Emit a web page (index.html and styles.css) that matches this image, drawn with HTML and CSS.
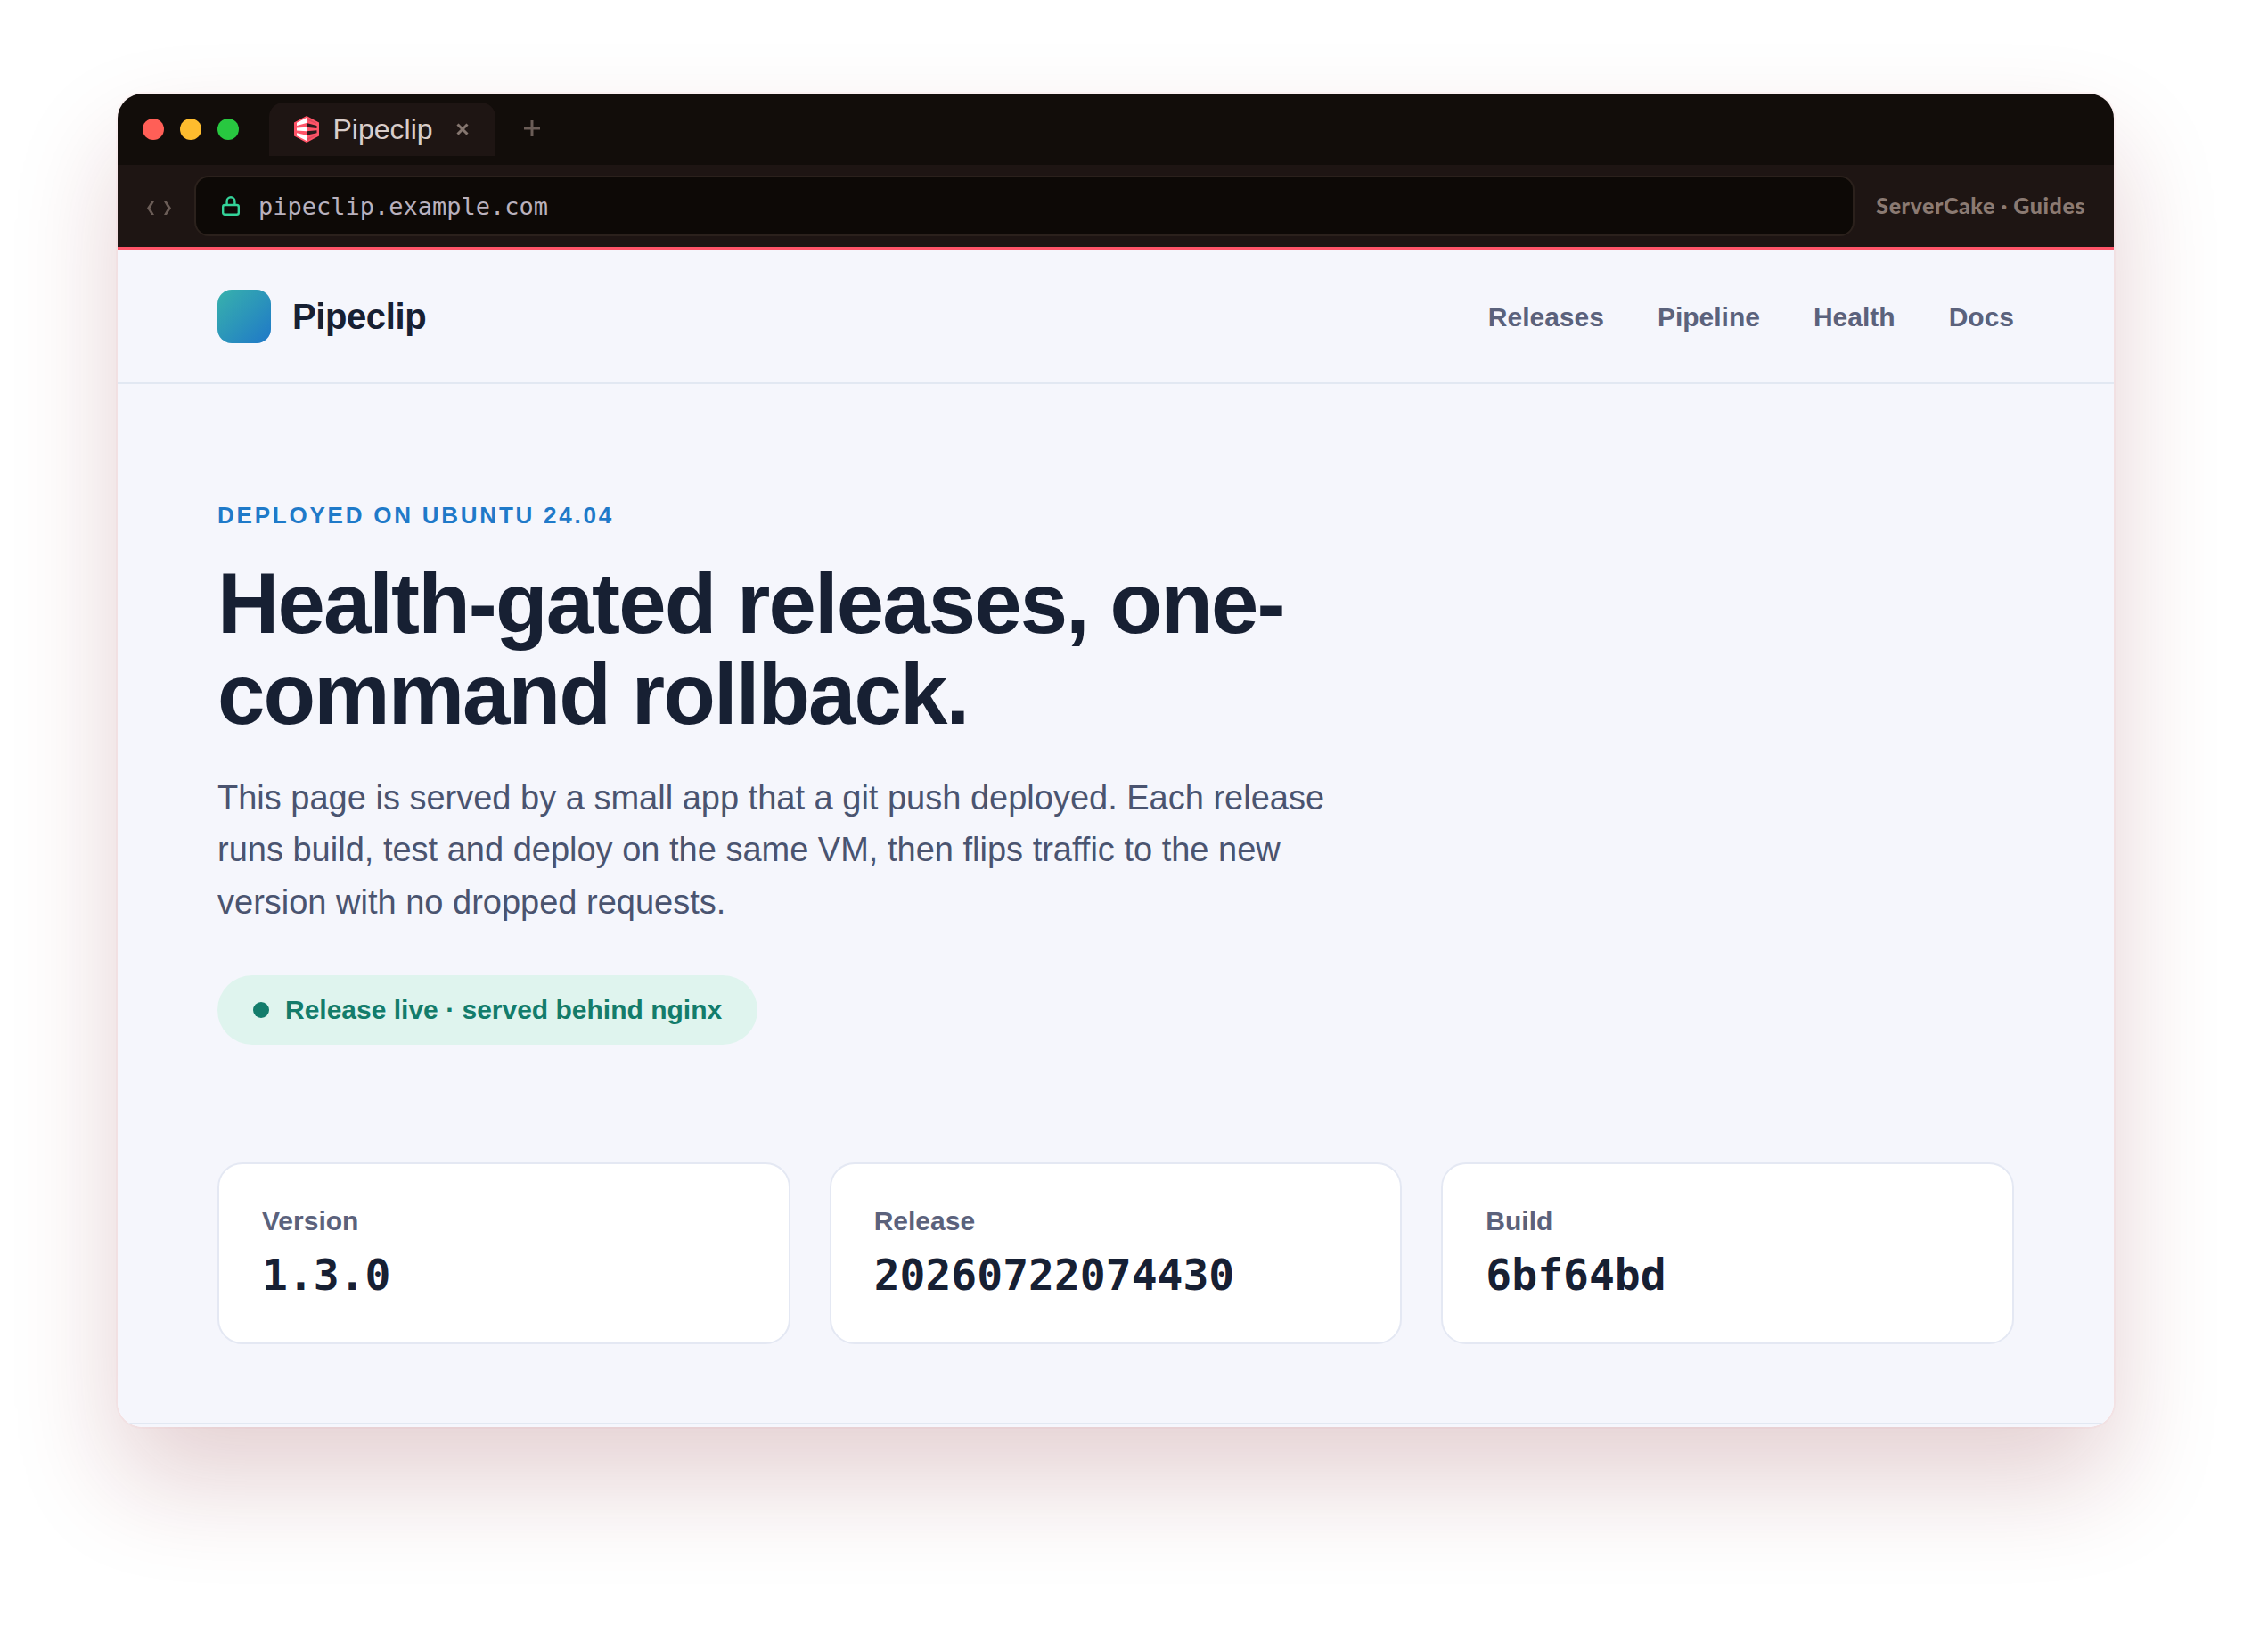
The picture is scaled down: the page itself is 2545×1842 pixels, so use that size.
FILE: index.html
```html
<!DOCTYPE html>
<html lang="en">
<head>
    <meta charset="UTF-8">
    <meta name="viewport" content="width=device-width, initial-scale=1.0">
    <title>Pipeclip</title>
    <link rel="stylesheet" href="styles.css">
</head>
<body>
    <div class="window">
        <div class="titlebar">
            <div class="dots">
                <span class="dot dot-red"></span>
                <span class="dot dot-yellow"></span>
                <span class="dot dot-green"></span>
            </div>
            <div class="tab">
                <svg class="favicon" viewBox="0 0 32 32">
                    <path d="M16 1 30 8.5V23.5L16 31 2 23.5V8.5Z" fill="#ff5468"/>
                    <path d="M16 3V9L5 12V8.8ZM16 13.8V18.2L5 17.4V14.4ZM16 22.8V29L5 23.2V20.2Z" fill="#fff"/>
                    <path d="M16 9 27.5 12V15L16 13.8ZM16 18.2 27.5 17.2V20.2L16 22.8Z" fill="#2a1a1c"/>
                    <path d="M16 3 27 8.8V10L16 5.5ZM16 26.5 27 22V23.2L16 29Z" fill="#e04a5e"/>
                </svg>
                <span class="tab-title">Pipeclip</span>
                <svg class="tab-close" viewBox="0 0 14 14"><path d="M1.5 1.5 12.5 12.5M12.5 1.5 1.5 12.5"/></svg>
            </div>
            <svg class="tab-new" viewBox="0 0 18 18"><path d="M9 0V18M0 9H18"/></svg>
        </div>
        <div class="toolbar">
            <div class="arrows">
                <svg viewBox="0 0 8 15"><path d="M8 0H5L0 7.5 5 15H8L3.6 7.5Z"/></svg>
                <svg viewBox="0 0 8 15"><path d="M0 0H3L8 7.5 3 15H0L4.4 7.5Z"/></svg>
            </div>
            <div class="address">
                <svg class="lock" viewBox="0 0 20 22">
                    <rect x="1.2" y="10" width="17.6" height="10.8" rx="2"/>
                    <path d="M5.6 10V5.6a4.4 4.4 0 0 1 8.8 0V10"/>
                </svg>
                <span>pipeclip.example.com</span>
            </div>
            <div class="source">ServerCake · Guides</div>
        </div>

        <div class="page">
            <header class="header">
                <div class="brand">
                    <span class="logo"></span>
                    <span>Pipeclip</span>
                </div>
                <nav class="nav">
                    <a>Releases</a>
                    <a>Pipeline</a>
                    <a>Health</a>
                    <a>Docs</a>
                </nav>
            </header>

            <main class="main">
                <p class="eyebrow">DEPLOYED ON UBUNTU 24.04</p>
                <h1>Health-gated releases, one-command rollback.</h1>
                <p class="lead">This page is served by a small app that a git push deployed. Each release runs build, test and deploy on the same VM, then flips traffic to the new version with no dropped requests.</p>
                <div class="status"><span class="status-dot"></span>Release live · served behind nginx</div>

                <div class="cards">
                    <div class="card">
                        <div class="label">Version</div>
                        <div class="value">1.3.0</div>
                    </div>
                    <div class="card">
                        <div class="label">Release</div>
                        <div class="value">20260722074430</div>
                    </div>
                    <div class="card">
                        <div class="label">Build</div>
                        <div class="value">6bf64bd</div>
                    </div>
                </div>
            </main>

            <footer class="footer"></footer>
        </div>
    </div>
</body>
</html>
```
FILE: styles.css
```css
* {
    box-sizing: border-box;
}
body {
    margin: 0;
    padding: 105px 0 0 132px;
    height: 1842px;
    overflow: hidden;
    background: #fff;
    font-family: "Liberation Sans", Arial, sans-serif;
    color: #172033;
}
.window {
    display: flex;
    flex-direction: column;
    width: 2240px;
    height: 1496px;
    border-radius: 28px;
    overflow: hidden;
    box-shadow: 0 60px 120px rgba(120, 20, 30, 0.2), 0 0 0 2px rgba(255, 84, 104, 0.04);
}

/* browser chrome */
.titlebar {
    display: flex;
    align-items: center;
    height: 80px;
    padding-left: 28px;
    background: #120d0a;
}
.dots {
    display: flex;
    gap: 18px;
}
.dot {
    width: 24px;
    height: 24px;
    border-radius: 50%;
}
.dot-red {
    background: #ff5f57;
}
.dot-yellow {
    background: #febc2e;
}
.dot-green {
    background: #28c840;
}
.tab {
    display: flex;
    align-items: center;
    width: 254px;
    height: 60px;
    margin-left: 34px;
    padding-left: 26px;
    border-radius: 16px 16px 0 0;
    background: #1e1513;
}
.favicon {
    width: 32px;
    height: 32px;
}
.tab-title {
    margin-left: 13.5px;
    font-size: 32px;
    line-height: 40px;
    color: #d9cdca;
}
.tab-close {
    width: 14px;
    height: 14px;
    margin-left: 26px;
    stroke: #85766f;
    stroke-width: 3;
}
.tab-new {
    width: 18px;
    height: 18px;
    margin: -2px 0 0 32px;
    stroke: #6b5d57;
    stroke-width: 3;
}
.toolbar {
    display: flex;
    align-items: center;
    height: 96px;
    padding: 0 32px;
    border-bottom: 4px solid #ff5468;
    background: #1e1513;
}
.arrows {
    display: flex;
    gap: 11px;
    width: 54px;
    padding: 5px 0 0 1px;
}
.arrows svg {
    width: 8px;
    height: 15px;
    fill: #6b5d57;
}
.address {
    display: flex;
    align-items: center;
    gap: 21px;
    width: 1864px;
    height: 68px;
    padding-left: 29px;
    border: 2px solid #2b211c;
    border-radius: 16px;
    background: #0d0906;
    font-family: "DejaVu Sans Mono", monospace;
    font-size: 27px;
    color: #b9b1bd;
}
.lock {
    width: 20px;
    height: 22px;
    fill: none;
    stroke: #34d399;
    stroke-width: 2.4;
}
.source {
    margin-left: 24px;
    padding-bottom: 2px;
    font-family: Lato, sans-serif;
    font-size: 25px;
    font-weight: 900;
    letter-spacing: 0.55px;
    white-space: nowrap;
    color: #8b7a72;
}

/* page */
.page {
    flex: 1;
    background: #f5f6fc;
}
.header {
    display: flex;
    align-items: center;
    justify-content: space-between;
    height: 150px;
    padding: 0 112px;
    border-bottom: 2px solid #e2e8f2;
}
.brand {
    display: flex;
    align-items: center;
    gap: 24px;
    font-size: 40px;
    font-weight: bold;
    letter-spacing: -0.01em;
}
.logo {
    width: 60px;
    height: 60px;
    border-radius: 16px;
    background: linear-gradient(135deg, #38b2ac, #1f78c8);
}
.nav {
    display: flex;
    gap: 60px;
    padding-top: 1px;
    font-size: 30px;
    font-weight: bold;
    color: #5b627c;
}
.main {
    padding: 127px 112px 0;
}
.eyebrow {
    margin: 0 0 28px;
    font-size: 26px;
    font-weight: bold;
    line-height: 40px;
    letter-spacing: 2.77px;
    color: #1f7ac9;
}
h1 {
    width: 1280px;
    margin: 0 0 36px;
    font-size: 96px;
    line-height: 102px;
    letter-spacing: -0.02em;
}
.lead {
    width: 1260px;
    margin: 0 0 52.8px;
    font-size: 38px;
    line-height: 58.4px;
    color: #4a5470;
}
.status {
    display: inline-flex;
    align-items: center;
    gap: 18px;
    height: 78px;
    padding: 0 40px;
    border-radius: 39px;
    background: #dff4ee;
    font-size: 30px;
    font-weight: bold;
    color: #137c6b;
}
.status-dot {
    width: 18px;
    height: 18px;
    border-radius: 50%;
    background: #137c6b;
}
.cards {
    display: grid;
    grid-template-columns: repeat(3, 1fr);
    gap: 44px;
    margin-top: 132px;
}
.card {
    height: 204px;
    padding: 46px 48px;
    border: 2px solid #e4e8f3;
    border-radius: 28px;
    background: #fff;
}
.label {
    margin-bottom: 12px;
    font-size: 30px;
    font-weight: bold;
    line-height: 36px;
    color: #5b627c;
}
.value {
    font-family: "DejaVu Sans Mono", monospace;
    font-size: 48px;
    font-weight: bold;
    line-height: 60px;
}
.footer {
    margin-top: 88px;
    border-top: 2px solid #e2e8f2;
}
```
